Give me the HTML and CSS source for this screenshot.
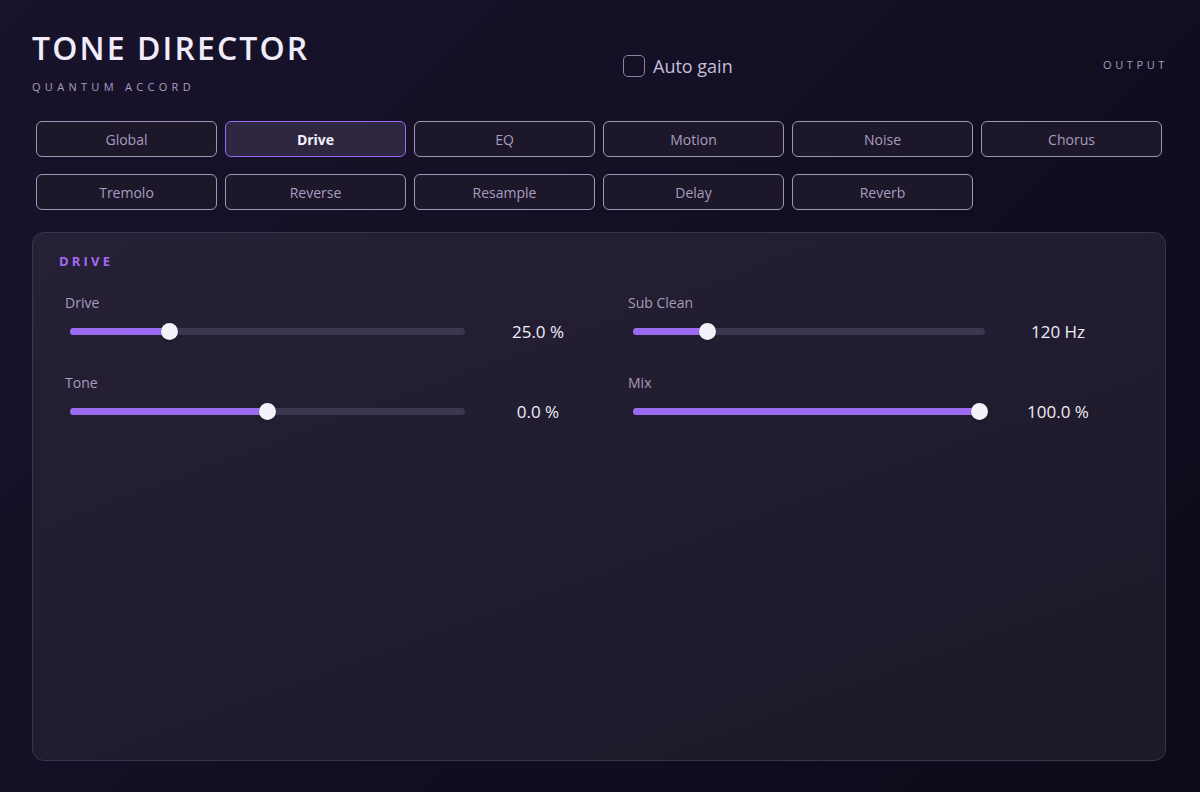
FILE: index.html
```html
<!DOCTYPE html>
<html>
<head>
    <meta charset="UTF-8">
    <title>Tone Director</title>
    <link rel="stylesheet" href="styles.css">
</head>
<body>
<div class="app">
    <div class="top">
        <div class="brand">
            <h1 class="brand_title">TONE DIRECTOR</h1>
            <p class="brand_sub">QUANTUM ACCORD</p>
        </div>
        <label class="auto_gain">
            <span class="check_box"></span>
            <span>Auto gain</span>
        </label>
        <div class="output">OUTPUT</div>
    </div>

    <!--模块切换-->
    <div class="tabs">
        <div class="tab">Global</div>
        <div class="tab tab_active">Drive</div>
        <div class="tab">EQ</div>
        <div class="tab">Motion</div>
        <div class="tab">Noise</div>
        <div class="tab">Chorus</div>
        <div class="tab">Tremolo</div>
        <div class="tab">Reverse</div>
        <div class="tab">Resample</div>
        <div class="tab">Delay</div>
        <div class="tab">Reverb</div>
    </div>

    <div class="panel">
        <p class="panel_title">DRIVE</p>
        <div class="controls">
            <div class="ctrl">
                <div class="ctrl_label">Drive</div>
                <div class="ctrl_row">
                    <div class="track"><div class="fill" style="width: 25.3%"><span class="thumb"></span></div></div>
                    <div class="ctrl_value">25.0 %</div>
                </div>
            </div>
            <div class="ctrl">
                <div class="ctrl_label">Sub Clean</div>
                <div class="ctrl_row">
                    <div class="track"><div class="fill" style="width: 21.3%"><span class="thumb"></span></div></div>
                    <div class="ctrl_value">120 Hz</div>
                </div>
            </div>
            <div class="ctrl">
                <div class="ctrl_label">Tone</div>
                <div class="ctrl_row">
                    <div class="track"><div class="fill" style="width: 50%"><span class="thumb"></span></div></div>
                    <div class="ctrl_value">0.0 %</div>
                </div>
            </div>
            <div class="ctrl">
                <div class="ctrl_label">Mix</div>
                <div class="ctrl_row">
                    <div class="track"><div class="fill" style="width: 98.6%"><span class="thumb"></span></div></div>
                    <div class="ctrl_value">100.0 %</div>
                </div>
            </div>
        </div>
    </div>
</div>
</body>
</html>
```

FILE: styles.css
```css
* {
    margin: 0;
    padding: 0;
    box-sizing: border-box;
}

html, body {
    height: 100%;
}

body {
    background: linear-gradient(135deg, #18132b 0%, #120e22 55%, #0d0a19 100%);
    font-family: "Open Sans", "Noto Sans", sans-serif;
    color: #f1ecfa;
}

.app {
    height: 100%;
    padding: 28px 34px 31px 32px;
    display: flex;
    flex-direction: column;
}

/* 顶部 */
.top {
    display: grid;
    grid-template-columns: 591px auto 1fr;
    align-items: start;
}

.brand_title {
    font-size: 32px;
    line-height: 40px;
    font-weight: 600;
    letter-spacing: 2.1px;
    color: #f1ecfa;
}

.brand_sub {
    margin-top: 12px;
    font-size: 11px;
    line-height: 14px;
    letter-spacing: 4.3px;
    color: #a99ec2;
}

.auto_gain {
    margin-top: 26px;
    display: flex;
    align-items: center;
    gap: 8px;
    font-size: 18px;
    color: #c6bedb;
}

.check_box {
    width: 22px;
    height: 22px;
    border: 1.5px solid #8c82a6;
    border-radius: 5px;
}

.output {
    margin-top: 30px;
    justify-self: end;
    font-size: 11px;
    line-height: 14px;
    letter-spacing: 3.6px;
    margin-right: -2px;
    color: #a99ec2;
}

/* tabs */
.tabs {
    margin-top: 27px;
    padding-left: 4px;
    display: grid;
    grid-template-columns: repeat(6, 181px);
    column-gap: 8px;
    row-gap: 17px;
}

.tab {
    height: 36px;
    border: 1.6px solid #a097b4;
    border-radius: 6px;
    background-color: #1c1729;
    color: #a99dc2;
    font-size: 14px;
    display: flex;
    align-items: center;
    justify-content: center;
}

.tab_active {
    background-color: #2f2742;
    border-color: #9a6af0;
    color: #f6f2ff;
    font-weight: 700;
}

/* 面板 */
.panel {
    margin-top: 22px;
    flex: 1;
    border: 1px solid #3a3450;
    border-radius: 12px;
    background: linear-gradient(160deg, #262036 0%, #211c2f 50%, #1d1928 100%);
    padding: 19px 26px;
}

.panel_title {
    font-size: 13px;
    line-height: 18px;
    font-weight: 700;
    letter-spacing: 3.2px;
    color: #a66af4;
}

.controls {
    margin-top: 24px;
    padding-left: 6px;
    display: grid;
    grid-template-columns: 546px 503px;
    column-gap: 17px;
    row-gap: 28px;
}

.ctrl_label {
    font-size: 14px;
    line-height: 18px;
    color: #a69cbd;
}

.ctrl_row {
    margin-top: 4px;
    height: 30px;
    padding-left: 5px;
    display: flex;
    align-items: center;
}

.track {
    flex: 1;
    height: 7px;
    border-radius: 4px;
    background-color: #3d3650;
}

.fill {
    position: relative;
    height: 100%;
    border-radius: 4px;
    background-color: #9b6cf2;
}

.thumb {
    position: absolute;
    right: -8px;
    top: -5px;
    width: 17px;
    height: 17px;
    border-radius: 50%;
    background-color: #f3f1fa;
    box-shadow: 0 1px 2px rgba(0, 0, 0, 0.35);
}

.ctrl_value {
    width: 146px;
    text-align: center;
    font-size: 17px;
    color: #f1edf8;
}
```
